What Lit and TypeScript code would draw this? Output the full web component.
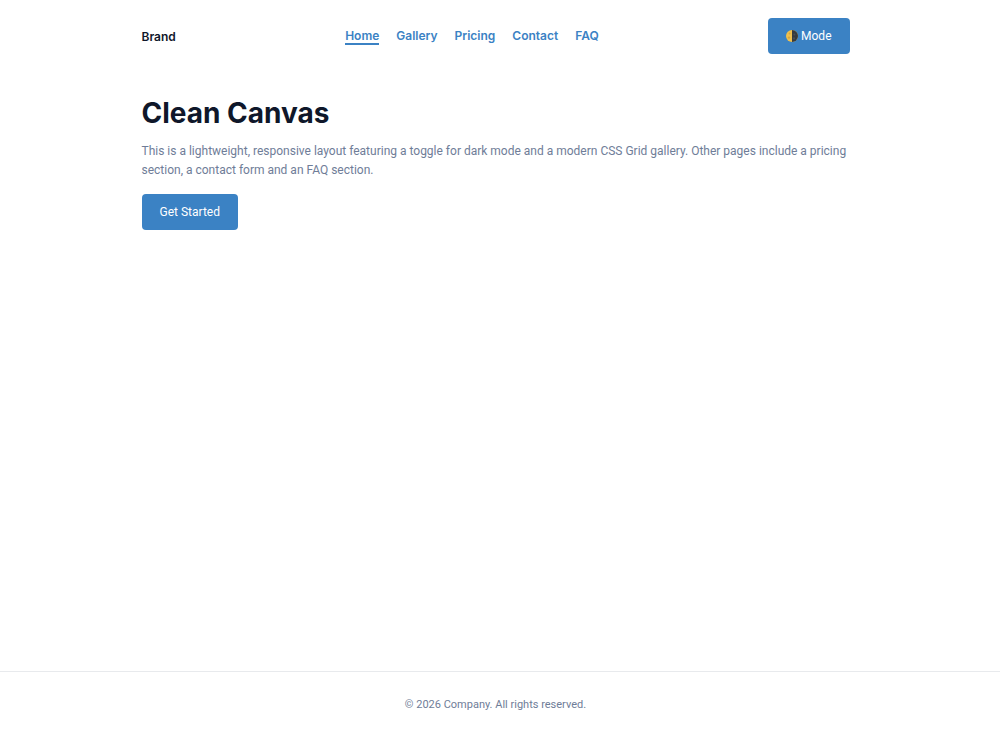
import { LitElement, html, css } from "lit";
import { customElement, state } from "lit/decorators.js";

const LINKS = ["Home", "Gallery", "Pricing", "Contact", "FAQ"];

@customElement("app-root")
class AppRoot extends LitElement {
  @state() private current = "Home";
  @state() private dark = false;

  static styles = css`
    :host {
      --bg: #ffffff;
      --text: #0f172a;
      --muted: #6f7d98;
      --accent: #3b82c4;
      --line: #e8eaed;
      display: block;
      font-family: Roboto, Inter, sans-serif;
      font-size: 12px;
      line-height: 19px;
    }
    .page {
      box-sizing: border-box;
      min-height: 100vh;
      display: flex;
      flex-direction: column;
      background: var(--bg);
      color: var(--text);
    }
    .dark {
      --bg: #0f172a;
      --text: #f1f5f9;
      --muted: #94a3b8;
      --line: #334155;
    }
    .container {
      box-sizing: border-box;
      width: 100%;
      max-width: 744px;
      margin: 0 auto;
      padding: 0 18px;
    }
    .shell {
      padding-right: 9px;
      box-sizing: border-box;
    }
    .bar {
      display: flex;
      align-items: center;
      justify-content: space-between;
      padding-top: 18px;
      padding-bottom: 17px;
    }
    .brand,
    .link {
      font-family: Inter, sans-serif;
      font-weight: 600;
    }
    .nav {
      display: flex;
      gap: 17px;
    }
    .link {
      color: var(--accent);
      text-decoration: none;
      line-height: 14px;
      border-top: 2px solid transparent;
      border-bottom: 2px solid transparent;
    }
    .link.active {
      border-bottom-color: var(--accent);
    }
    .button {
      display: inline-flex;
      align-items: center;
      gap: 3px;
      height: 36px;
      padding: 0 18px;
      border: 0;
      border-radius: 4px;
      background: var(--accent);
      color: #ffffff;
      font: inherit;
      cursor: pointer;
    }
    .main {
      flex: 1;
    }
    .title {
      margin: 24px 0 11px;
      font-family: Inter, sans-serif;
      font-size: 28px;
      line-height: 36px;
      font-weight: 700;
    }
    .lead {
      margin: 0 0 14px;
      color: var(--muted);
    }
    .footer {
      border-top: 1px solid var(--line);
      padding-top: 23px;
      padding-bottom: 36px;
      text-align: center;
      font-size: 11px;
      color: var(--muted);
    }
  `;

  render() {
    return html`
      <div class="page ${this.dark ? "dark" : ""}">
        <header class="shell">
          <div class="container bar">
            <span class="brand">Brand</span>
            <nav class="nav" aria-label="Main">
              ${LINKS.map(
                (name) => html`<a
                  class="link ${name === this.current ? "active" : ""}"
                  href="#${name.toLowerCase()}"
                  @click=${() => (this.current = name)}
                  >${name}</a
                >`
              )}
            </nav>
            <button class="button" type="button" @click=${() => (this.dark = !this.dark)}>
              <svg width="12" height="12" viewBox="0 0 12 12" aria-hidden="true">
                <circle cx="6" cy="6" r="6" fill="#f0c04c" />
                <path d="M6 0a6 6 0 0 1 0 12z" fill="#363a3e" />
                <circle cx="3.6" cy="3.6" r="1" fill="#d9a53c" />
                <circle cx="3" cy="7.6" r="1.2" fill="#d9a53c" />
                <circle cx="8.4" cy="4.4" r="1" fill="#4a4f52" />
                <circle cx="8" cy="8.4" r="1.1" fill="#4a4f52" />
              </svg>
              Mode
            </button>
          </div>
        </header>
        <main class="main shell">
          <div class="container">
            <h1 class="title">Clean Canvas</h1>
            <p class="lead">
              This is a lightweight, responsive layout featuring a toggle for dark mode and a modern
              CSS Grid gallery. Other pages include a pricing section, a contact form and an FAQ
              section.
            </p>
            <button class="button" type="button">Get Started</button>
          </div>
        </main>
        <footer class="footer shell">© 2026 Company. All rights reserved.</footer>
      </div>
    `;
  }
}
